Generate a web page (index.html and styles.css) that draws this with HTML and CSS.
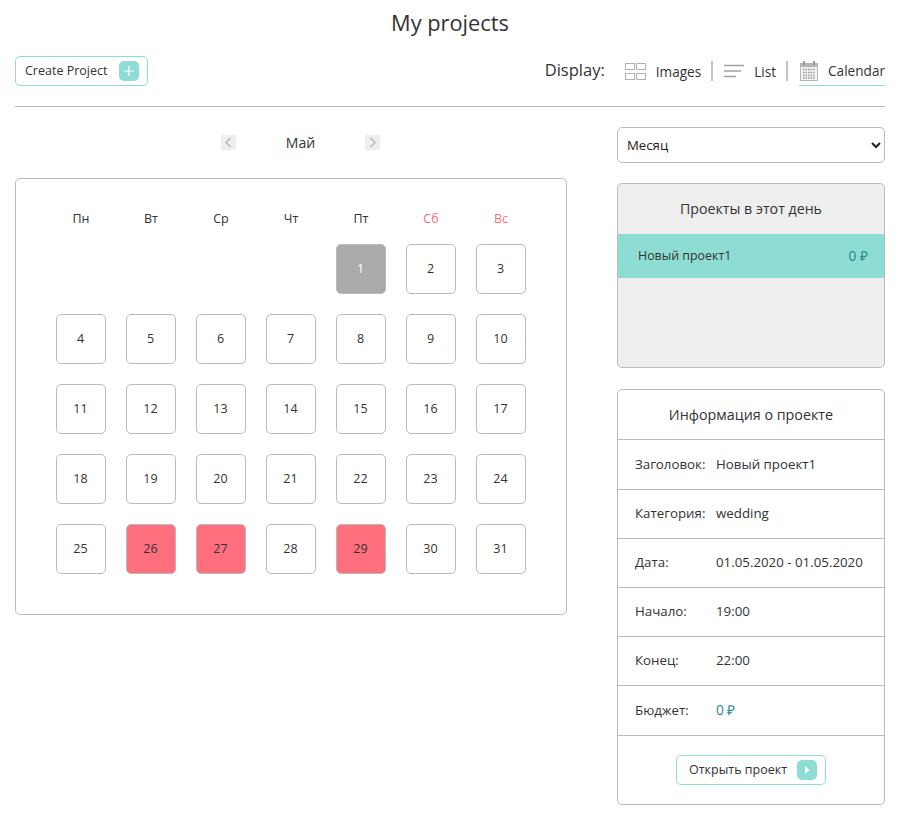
FILE: index.html
```html
<!DOCTYPE html>
<html lang="ru">

<head>
    <meta charset="UTF-8">
    <meta name="viewport" content="width=device-width, initial-scale=1.0">
    <title>My projects</title>
    <link rel="stylesheet" href="styles.css">
</head>

<body>
    <h1 class="page-title">My projects</h1>

    <div class="toolbar">
        <a class="btn btn-create" href="#"><span class="btn-text">Create Project</span>
            <span class="btn-icon">
                <svg width="20" height="20" viewBox="0 0 20 20"><path d="M10 5v10M5 10h10" stroke="#fff" stroke-width="1.2" fill="none"/></svg>
            </span>
        </a>
        <div class="display">
            <span class="display-label">Display:</span>
            <a class="display-item" href="#">
                <svg width="21" height="17" viewBox="0 0 21 17" fill="none" stroke="#b0b0b0"><rect x="0.5" y="0.5" width="9" height="6"/><rect x="11.5" y="0.5" width="9" height="6"/><rect x="0.5" y="10.5" width="9" height="6"/><rect x="11.5" y="10.5" width="9" height="6"/></svg>
                Images
            </a>
            <span class="display-sep"></span>
            <a class="display-item" href="#">
                <svg width="20" height="14" viewBox="0 0 20 14" fill="none" stroke="#a0a0a0" stroke-width="1.5"><path d="M0 1.5h20M0 7h17M0 12.5h12"/></svg>
                List
            </a>
            <span class="display-sep"></span>
            <a class="display-item active" href="#">
                <svg width="18" height="20" viewBox="0 0 18 20"><rect x="0.5" y="2.5" width="17" height="17" fill="#f2f2f2" stroke="#b5b5b5"/><rect x="1" y="3" width="16" height="3" fill="#b5b5b5"/><rect x="3" y="0" width="2" height="4" fill="#999"/><rect x="13" y="0" width="2" height="4" fill="#999"/><path d="M3 8.5h12M3 11.5h12M3 14.5h12M3 17h12" stroke="#999" stroke-width="1.3" stroke-dasharray="1.5 1"/></svg>
                Calendar
            </a>
        </div>
    </div>

    <div class="main">
        <div class="left">
            <div class="month-nav">
                <a class="month-arrow" href="#"><svg width="15" height="15" viewBox="0 0 15 15"><path d="M9.5 3L5 7.5 9.5 12" stroke="#888" fill="none"/></svg></a>
                <span class="month-name">Май</span>
                <a class="month-arrow" href="#"><svg width="15" height="15" viewBox="0 0 15 15"><path d="M5.5 3L10 7.5 5.5 12" stroke="#888" fill="none"/></svg></a>
            </div>

            <div class="calendar">
                <div class="week">
                    <span>Пн</span><span>Вт</span><span>Ср</span><span>Чт</span><span>Пт</span>
                    <span class="weekend">Сб</span><span class="weekend">Вс</span>
                </div>
                <div class="days">
                    <span class="day empty"></span><span class="day empty"></span><span class="day empty"></span><span class="day empty"></span>
                    <a class="day today" href="#">1</a><a class="day" href="#">2</a><a class="day" href="#">3</a>
                    <a class="day" href="#">4</a><a class="day" href="#">5</a><a class="day" href="#">6</a><a class="day" href="#">7</a><a class="day" href="#">8</a><a class="day" href="#">9</a><a class="day" href="#">10</a>
                    <a class="day" href="#">11</a><a class="day" href="#">12</a><a class="day" href="#">13</a><a class="day" href="#">14</a><a class="day" href="#">15</a><a class="day" href="#">16</a><a class="day" href="#">17</a>
                    <a class="day" href="#">18</a><a class="day" href="#">19</a><a class="day" href="#">20</a><a class="day" href="#">21</a><a class="day" href="#">22</a><a class="day" href="#">23</a><a class="day" href="#">24</a>
                    <a class="day" href="#">25</a><a class="day busy" href="#">26</a><a class="day busy" href="#">27</a><a class="day" href="#">28</a><a class="day busy" href="#">29</a><a class="day" href="#">30</a><a class="day" href="#">31</a>
                </div>
            </div>
        </div>

        <div class="right">
            <select class="period">
                <option>Месяц</option>
            </select>

            <div class="day-projects">
                <div class="day-projects-title">Проекты в этот день</div>
                <div class="day-project">
                    <span>Новый проект1</span>
                    <span class="money">0 ₽</span>
                </div>
            </div>

            <div class="info">
                <div class="info-title">Информация о проекте</div>
                <div class="info-row tall"><span class="info-key">Заголовок:</span><span>Новый проект1</span></div>
                <div class="info-row"><span class="info-key">Категория:</span><span>wedding</span></div>
                <div class="info-row"><span class="info-key">Дата:</span><span>01.05.2020 - 01.05.2020</span></div>
                <div class="info-row"><span class="info-key">Начало:</span><span>19:00</span></div>
                <div class="info-row"><span class="info-key">Конец:</span><span>22:00</span></div>
                <div class="info-row tall"><span class="info-key">Бюджет:</span><span class="money">0 ₽</span></div>
                <div class="info-foot">
                    <a class="btn btn-open" href="#"><span class="btn-text">Открыть проект</span>
                        <span class="btn-icon">
                            <svg width="20" height="20" viewBox="0 0 20 20"><path d="M8 6l4.5 4L8 14z" fill="#fff"/></svg>
                        </span>
                    </a>
                </div>
            </div>
        </div>
    </div>
</body>

</html>
```

FILE: styles.css
```css
html,
body {
    margin: 0;
    padding: 0;
}

body {
    font-family: "Open Sans", "Liberation Sans", sans-serif;
    font-size: 13.3px;
    color: #333;
    background-color: #fff;
    padding: 0 24px 0 15px;
}

a {
    color: inherit;
    text-decoration: none;
}

.page-title {
    margin: 0;
    height: 56px;
    padding-top: 8px;
    box-sizing: border-box;
    font-size: 21.8px;
    line-height: 30px;
    font-weight: 400;
    text-align: center;
}

.toolbar {
    display: flex;
    justify-content: space-between;
    align-items: flex-start;
    height: 50px;
    border-bottom: 1px solid #bbb;
}

.btn {
    display: inline-flex;
    align-items: center;
    justify-content: space-between;
    box-sizing: border-box;
    height: 30px;
    border: 1px solid #8eddd4;
    border-radius: 5px;
    background-color: #fff;
}

.btn-text {
    padding-bottom: 2px;
}

.btn-icon {
    width: 20px;
    height: 20px;
    border-radius: 5px;
    background-color: #8eddd4;
    display: block;
}

.btn-icon svg {
    display: block;
}

.btn-create {
    width: 133px;
    padding: 0 8px 0 9px;
    font-size: 12.5px;
}

.display {
    display: flex;
    align-items: center;
    height: 30px;
}

.display-label {
    font-size: 16.5px;
    margin-right: 20px;
    position: relative;
    top: -2px;
}

.display-item {
    display: flex;
    align-items: center;
    gap: 10px;
    height: 30px;
    font-size: 13.6px;
}

.display-item.active {
    border-bottom: 1px solid #8eddd4;
    box-sizing: border-box;
    padding-left: 1px;
}

.display-sep {
    width: 2px;
    height: 20px;
    background-color: #c4c4c4;
    margin: 0 11px 0 10px;
}

.main {
    display: flex;
    justify-content: space-between;
    align-items: flex-start;
    padding-top: 20px;
}

.left {
    width: 552px;
}

.right {
    width: 268px;
}

.month-nav {
    display: flex;
    justify-content: center;
    align-items: center;
    height: 31px;
    margin-bottom: 20px;
    padding-left: 18px;
}

.month-arrow {
    width: 15px;
    height: 15px;
    background-color: #eee;
    display: block;
}

.month-arrow svg {
    display: block;
}

.month-name {
    width: 129px;
    padding-left: 1px;
    box-sizing: border-box;
    text-align: center;
    font-size: 14px;
}

.calendar {
    box-sizing: border-box;
    height: 437px;
    padding: 0 40px;
    border: 1px solid #bbb;
    border-radius: 5px;
}

.week {
    display: grid;
    grid-template-columns: repeat(7, 50px);
    column-gap: 20px;
    height: 65px;
    line-height: 79px;
    font-size: 12.5px;
    text-align: center;
}

.weekend {
    color: #f4707e;
}

.days {
    display: grid;
    grid-template-columns: repeat(7, 50px);
    grid-auto-rows: 50px;
    gap: 20px;
}

.day {
    box-sizing: border-box;
    display: flex;
    align-items: center;
    justify-content: center;
    padding: 0 1px 2px 0;
    font-size: 12.5px;
    border: 1px solid #bbb;
    border-radius: 5px;
}

.day.empty {
    border: none;
}

.day.today {
    background-color: #aaa;
    color: #fff;
}

.day.busy {
    background-color: #ff6f7d;
}

.period {
    display: block;
    width: 100%;
    height: 36px;
    padding: 0 5px;
    font-family: inherit;
    font-size: 13.2px;
    color: #222;
    background-color: #fff;
    border: 1px solid #bbb;
    border-radius: 5px;
}

.day-projects {
    box-sizing: border-box;
    height: 185px;
    margin-top: 20px;
    background-color: #eee;
    border: 1px solid #bbb;
    border-radius: 5px;
    overflow: hidden;
}

.day-projects-title {
    height: 50px;
    line-height: 50px;
    text-align: center;
    font-size: 14.2px;
}

.day-project {
    display: flex;
    justify-content: space-between;
    align-items: center;
    box-sizing: border-box;
    height: 44px;
    padding: 0 16px 2px 20px;
    font-size: 12.4px;
    background-color: #8eddd4;
}

.money {
    color: #1f8a8a;
    font-size: 13.8px;
}

.info {
    box-sizing: border-box;
    height: 416px;
    margin-top: 21px;
    border: 1px solid #bbb;
    border-radius: 5px;
}

.info-title {
    height: 49px;
    line-height: 49px;
    text-align: center;
    font-size: 14.3px;
}

.info-row {
    display: flex;
    align-items: center;
    box-sizing: border-box;
    height: 49px;
    padding: 0 0 2px 17px;
    border-top: 1px solid #bbb;
}

.info-row.tall {
    height: 50px;
}

.info-key {
    width: 81px;
}

.info-foot {
    box-sizing: border-box;
    height: 69px;
    padding-top: 19px;
    border-top: 1px solid #bbb;
    text-align: center;
}

.btn-open {
    width: 150px;
    padding: 0 8px 0 12px;
    font-size: 12.5px;
}
```
